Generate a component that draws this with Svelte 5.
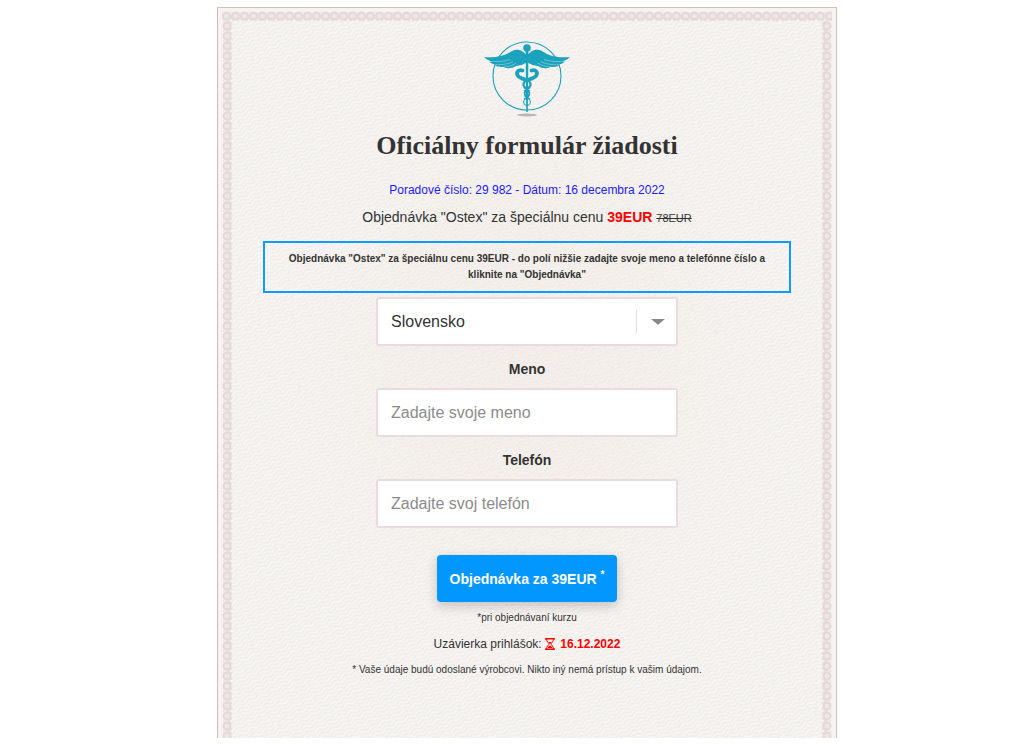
<script lang="ts">
	const product = 'Ostex';
	const price = '39EUR';
	const oldPrice = '78EUR';
	const countries = ['Slovensko'];

	let country = $state('Slovensko');
	let name = $state('');
	let phone = $state('');
</script>

<main class="page">
	<section class="certificate">
		<svg class="paper" aria-hidden="true">
			<defs>
				<pattern id="weave" width="12" height="8" patternUnits="userSpaceOnUse" patternTransform="rotate(-28)">
					<path d="M0 2q3-3 6 0t6 0M0 6q3-3 6 0t6 0" fill="none" stroke="#e7e3df" stroke-width="1" />
					<path d="M0 4q3-3 6 0t6 0" fill="none" stroke="#fbfaf8" stroke-width="1" />
				</pattern>
				<pattern id="chain-v" width="12" height="10" patternUnits="userSpaceOnUse">
					<circle cx="5" cy="5" r="3.500" fill="#efe6e5" stroke="#e3d8d8" stroke-width="2" />
					<path d="M1 0q4-2 9 3M1 10q4 2 9-3" fill="none" stroke="#e6dcdc" stroke-width="1.500" />
				</pattern>
				<pattern id="chain-h" width="9" height="12" patternUnits="userSpaceOnUse">
					<circle cx="4.500" cy="5" r="3.500" fill="#efe6e5" stroke="#e3d8d8" stroke-width="2" />
					<path d="M0 1q-2 4 3 9M9 1q2 4-3 9" fill="none" stroke="#e6dcdc" stroke-width="1.500" />
				</pattern>
				<radialGradient id="blush">
					<stop offset="0" stop-color="#f1e9e2" stop-opacity="0.5" />
					<stop offset="0.5" stop-color="#f2ebe5" stop-opacity="0.4" />
					<stop offset="1" stop-color="#f5f2ef" stop-opacity="0" />
				</radialGradient>
				<filter id="grain" x="0" y="0" width="100%" height="100%">
					<feTurbulence type="fractalNoise" baseFrequency="0.3" numOctaves="2" seed="4" />
					<feColorMatrix values="0 0 0 0 0.7  0 0 0 0 0.66  0 0 0 0 0.62  0 0 0 1.2 -0.55" />
				</filter>
			</defs>
			<rect width="100%" height="100%" fill="#f7f5f3" />
			<rect width="100%" height="100%" fill="url(#weave)" opacity="0.6" />
			<ellipse cx="50%" cy="48%" rx="44%" ry="46%" fill="url(#blush)" />
			<rect width="100%" height="100%" filter="url(#grain)" opacity="0.35" />
			<rect width="4" height="100%" fill="#f8f3ef" />
			<rect width="100%" height="4" fill="#f8f3ef" />
			<svg x="4" y="3" overflow="visible">
				<rect width="100%" height="12" fill="url(#chain-h)" />
			</svg>
			<svg x="4" y="13" overflow="visible">
				<rect width="12" height="100%" fill="url(#chain-v)" />
			</svg>
			<svg x="100%" y="13" overflow="visible">
				<rect width="12" height="100%" fill="url(#chain-v)" transform="translate(-4) scale(-1 1)" />
				<rect width="4" height="100%" fill="#f8f3ef" transform="translate(-4 -13)" />
			</svg>
		</svg>

		<form class="form" onsubmit={(e) => e.preventDefault()}>
			<svg class="logo" viewBox="0 0 90 80" role="img" aria-label="Caduceus">
				<ellipse cx="45" cy="76" rx="10" ry="1.5" fill="#b9b7b5" />
				<g fill="none" stroke="#1ba2bd">
					<circle cx="45" cy="37" r="34" stroke-width="1.1" />
					<path d="M40.500 31.500c-5-1.500-7 3-4 6 2 2 5 2 8 4M49.500 31.500c5-1.500 7 3 4 6-2 2-5 2-8 4" stroke-width="3.800" stroke-linecap="round" />
					<ellipse cx="45" cy="45.500" rx="3.600" ry="3.500" stroke-width="2.200" />
					<ellipse cx="45" cy="54.500" rx="2.300" ry="3" stroke-width="1.800" />
					<ellipse cx="45" cy="63" rx="3.500" ry="3.500" stroke-width="1" />
					<path d="M42 49l6 3M48 49l-6 3M43 57l5 3M47 57l-5 3" stroke-width="1.200" />
				</g>
				<g fill="#1ba2bd">
					<circle cx="45" cy="9" r="3.8" />
					<path d="M43.600 12h2.800l-.6 61h-1.600z" />
					<path d="M45 17c-3-5-9-8-15-5-8 6-18 7-28 6 3 3 6 4 9 4.500l-4 .2c3 2.300 6 3 9 2.800l-3 1c4 2 8 1.500 11 1l-2 1.300c5 1 9 .2 12-1.800 4-.5 7-1 11-4 4 3 7 3.500 11 4 3 2 7 2.800 12 1.800l-2-1.300c3 .5 7 1 11-1l-3-1c3 .2 6-.5 9-2.800l-4-.2c3-.5 6-1.500 9-4.500-10 1-20 0-28-6-6-3-12 0-15 5z" />
				</g>
				<path d="M11 22.500c7 .5 13-.5 17-2M16 25.700c6 0 11-1 15-3M24 27.700c4-.5 7-1.500 10-3.500M79 22.500c-7 .5-13-.5-17-2M74 25.700c-6 0-11-1-15-3M66 27.700c-4-.5-7-1.500-10-3.500" fill="none" stroke="#e9f1f0" stroke-width=".4" />
			</svg>

			<h1>Oficiálny formulár žiadosti</h1>
			<p class="serial">Poradové číslo: 29 982 - Dátum: 16 decembra 2022</p>
			<p class="offer">
				Objednávka "{product}" za špeciálnu cenu <strong>{price}</strong> <s>{oldPrice}</s>
			</p>
			<p class="notice">
				Objednávka "{product}" za špeciálnu cenu {price} - do polí nižšie zadajte svoje meno a telefónne
				číslo a kliknite na "Objednávka"
			</p>

			<div class="select">
				<select aria-label="Krajina" bind:value={country}>
					{#each countries as item}
						<option>{item}</option>
					{/each}
				</select>
				<svg class="arrow" viewBox="0 0 14 6" aria-hidden="true">
					<path d="M0 0h14L8 5q-1 1-2 0z" fill="#888" />
				</svg>
			</div>

			<label for="name">Meno</label>
			<input id="name" type="text" placeholder="Zadajte svoje meno" bind:value={name} />

			<label for="phone">Telefón</label>
			<input id="phone" type="tel" placeholder="Zadajte svoj telefón" bind:value={phone} />

			<button type="submit">Objednávka za {price} <sup>*</sup></button>

			<p class="small">*pri objednávaní kurzu</p>
			<p class="deadline">
				Uzávierka prihlášok:
				<svg class="hourglass" viewBox="0 0 10 12" aria-hidden="true">
					<path d="M0 0h10v1.500H0zM0 10.500h10v1.500H0z" fill="red" />
					<path d="M1.500 1c0 3 2.500 4 2.500 5s-2.500 2-2.500 5M8.500 1c0 3-2.500 4-2.500 5s2.500 2 2.500 5" fill="none" stroke="red" />
					<path d="M3 4h4L5 6zM2.500 10q1-2 2.500-2.500Q6.500 8 7.500 10z" fill="red" />
				</svg>
				<strong>16.12.2022</strong>
			</p>
			<p class="small">* Vaše údaje budú odoslané výrobcovi. Nikto iný nemá prístup k vašim údajom.</p>
		</form>
	</section>
</main>

<style>
	:global(body) {
		margin: 0;
		background: #fff;
	}

	.page {
		padding: 7px 0 8px 30px;
		font-family: 'Liberation Sans', Arial, sans-serif;
		color: #333;
	}

	.certificate {
		position: relative;
		box-sizing: border-box;
		max-width: 620px;
		margin: 0 auto;
		padding: 31px 45px 60px;
		border: 1px solid #d0c0ba;
		border-bottom: 0;
	}

	.paper {
		position: absolute;
		inset: 0;
		width: 100%;
		height: 100%;
		overflow: hidden;
	}

	.form {
		position: relative;
		display: flex;
		flex-direction: column;
		align-items: center;
		text-align: center;
	}

	.logo {
		width: 90px;
		height: 80px;
	}

	h1 {
		margin: 11px 0 20px;
		font: bold 26px/32px 'Liberation Serif', 'Times New Roman', serif;
	}

	p {
		margin: 0;
	}

	.serial {
		margin-bottom: 8px;
		font-size: 12px;
		line-height: 16px;
		color: #1a1aff;
	}

	.offer {
		margin-bottom: 12px;
		font-size: 14px;
		line-height: 22px;
	}

	.offer strong,
	.deadline strong {
		color: red;
	}

	.offer s {
		font-size: 11px;
	}

	.notice {
		box-sizing: border-box;
		width: 100%;
		margin-bottom: 4px;
		padding: 8px 14px;
		border: 2px solid #0d9bff;
		font-size: 10px;
		font-weight: bold;
		line-height: 16px;
	}

	.select {
		position: relative;
		width: 100%;
		max-width: 302px;
	}

	.select::after {
		content: '';
		position: absolute;
		top: 13px;
		right: 41px;
		width: 1px;
		height: 23px;
		background: #ddd;
	}

	.arrow {
		position: absolute;
		top: 22px;
		right: 13px;
		width: 14px;
		height: 6px;
		pointer-events: none;
	}

	input,
	select {
		box-sizing: border-box;
		display: block;
		width: 100%;
		max-width: 302px;
		height: 49px;
		margin: 0;
		padding: 0 13px;
		border: 2px solid #ecdbde;
		border-radius: 3px;
		background: #fff;
		color: #333;
		font-family: inherit;
		font-size: 16px;
		appearance: none;
	}

	input::placeholder {
		color: #8c8c8c;
		opacity: 1;
	}

	label {
		margin: 13px 0 9px;
		font-size: 14px;
		font-weight: bold;
		line-height: 20px;
	}

	button {
		height: 47px;
		margin: 27px 0 8px;
		padding: 0 13px;
		border: 0;
		border-radius: 4px;
		background: #0297ff;
		box-shadow: 0 4px 12px rgba(0, 0, 0, 0.2);
		color: #fff;
		font-family: inherit;
		font-size: 14px;
		font-weight: bold;
		cursor: pointer;
	}

	sup {
		font-size: 10px;
		line-height: 0;
	}

	.small {
		font-size: 10px;
		line-height: 16px;
	}

	.deadline {
		margin: 8px 0;
		font-size: 12px;
		line-height: 20px;
	}

	.hourglass {
		width: 10px;
		height: 12px;
		margin-right: 2px;
		vertical-align: -2px;
	}
</style>
